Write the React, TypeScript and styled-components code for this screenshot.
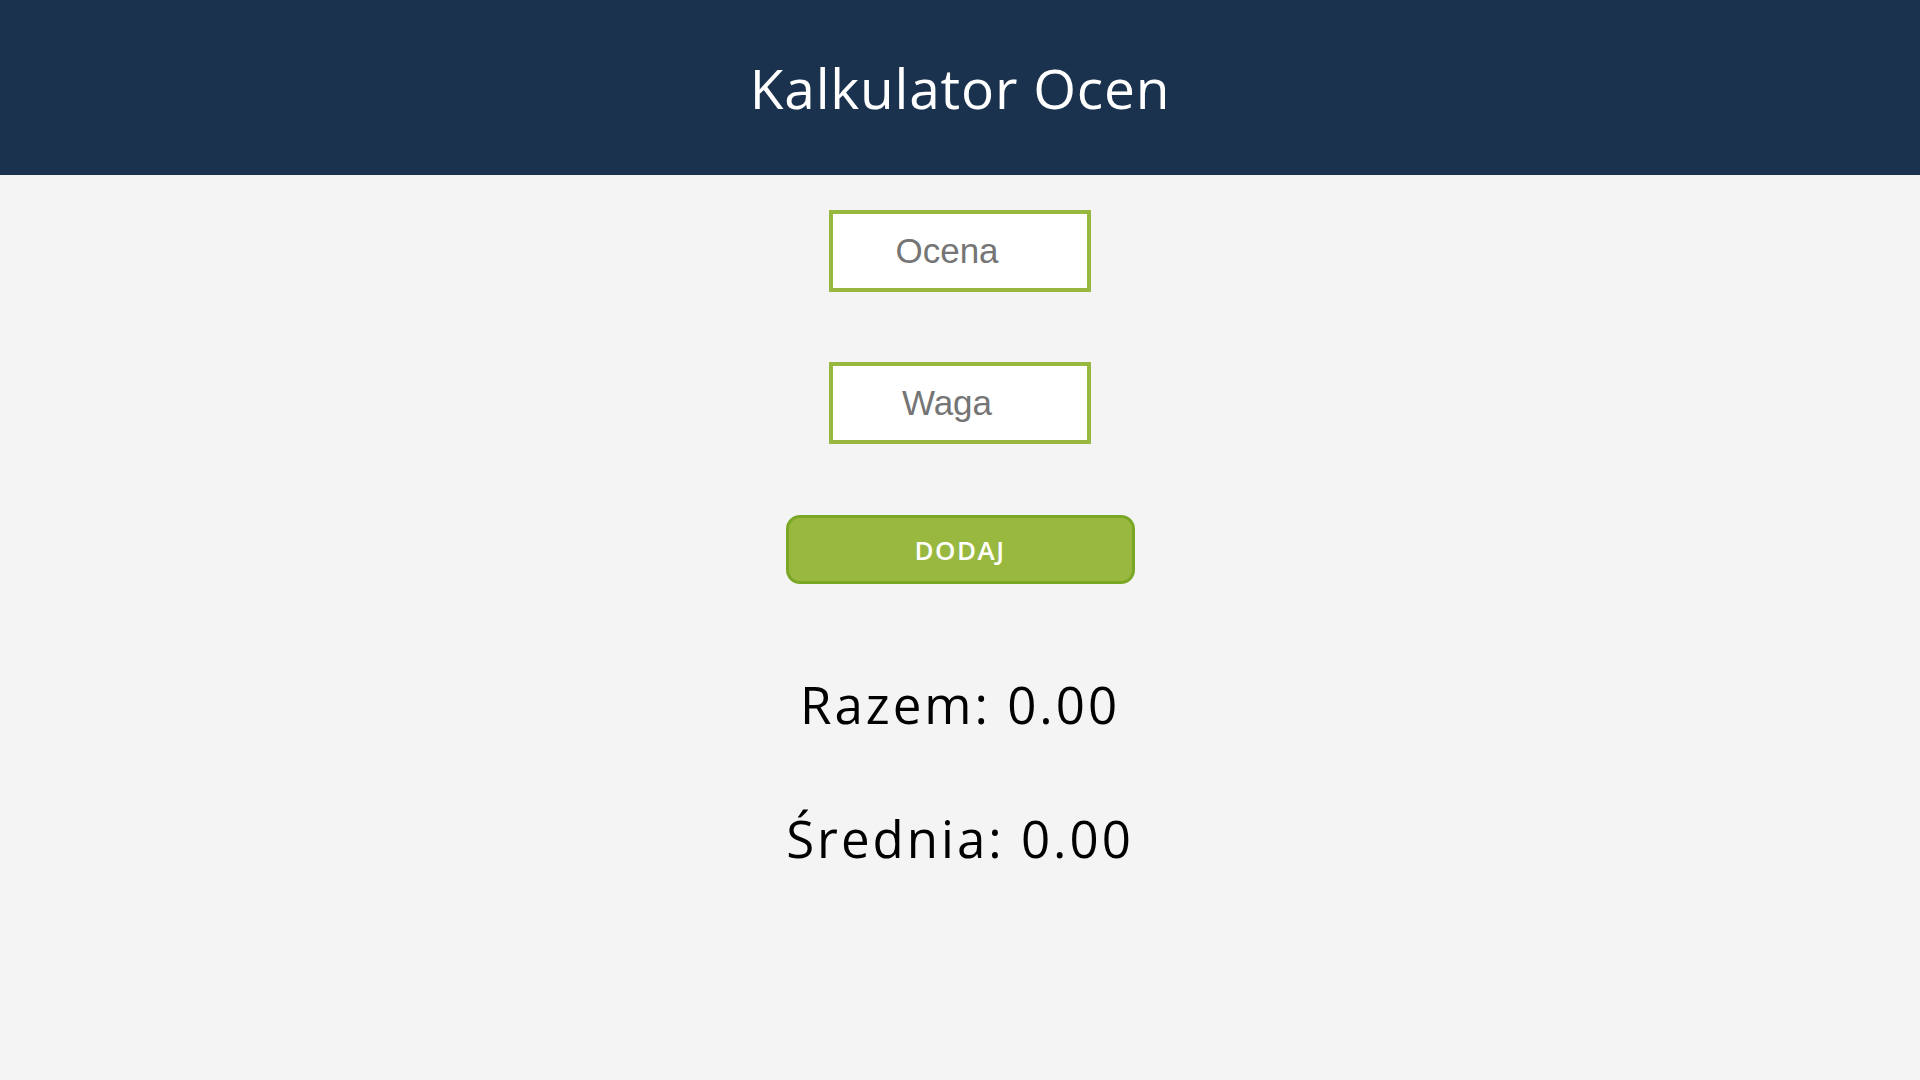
import React from "react";
import styled, { createGlobalStyle } from "styled-components";

const GlobalStyle = createGlobalStyle`
  html, body {
    margin: 0;
    padding: 0;
    background: #f4f4f4;
  }
  body {
    font-family: "Open Sans", "Liberation Sans", sans-serif;
  }
  * { box-sizing: border-box; }
`;

const Header = styled.header`
  height: 175px;
  background: #1a324d;
  display: flex;
  align-items: center;
  justify-content: center;
`;

const Title = styled.h1`
  margin: 0;
  color: #ffffff;
  font-family: "Open Sans", sans-serif;
  font-weight: 500;
  font-size: 55px;
  letter-spacing: 0.8px;
  line-height: 1;
`;

const Main = styled.main`
  display: flex;
  flex-direction: column;
  align-items: center;
  padding-top: 35px;
`;

const Field = styled.input`
  width: 262px;
  height: 82px;
  border: 4px solid #97b73e;
  background: #ffffff;
  font-family: "Liberation Sans", Arial, sans-serif;
  font-size: 35px;
  text-align: center;
  padding: 0 26px 0 0;
  margin: 0 0 70px 0;
  outline: none;
  color: #333;
  &::placeholder {
    color: #757575;
  }
`;

const AddButton = styled.button`
  width: 349px;
  height: 69px;
  margin-top: 1px;
  background: #99b840;
  border: 3px solid #7aa826;
  border-radius: 14px;
  color: #ffffff;
  font-family: "Open Sans", sans-serif;
  font-weight: 600;
  font-size: 26px;
  letter-spacing: 1.5px;
  cursor: pointer;
`;

const Result = styled.p<{ $top: number }>`
  margin: ${(p) => p.$top}px 0 0 0;
  color: #000000;
  font-family: "Open Sans", sans-serif;
  font-weight: 500;
  font-size: 51px;
  letter-spacing: 3px;
  line-height: 60px;
`;

export default function App() {
  return (
    <>
      <GlobalStyle />
      <Header>
        <Title>Kalkulator Ocen</Title>
      </Header>
      <Main>
        <Field type="text" placeholder="Ocena" />
        <Field type="text" placeholder="Waga" />
        <AddButton>DODAJ</AddButton>
        <Result $top={90}>Razem: 0.00</Result>
        <Result $top={74}>Średnia: 0.00</Result>
      </Main>
    </>
  );
}
